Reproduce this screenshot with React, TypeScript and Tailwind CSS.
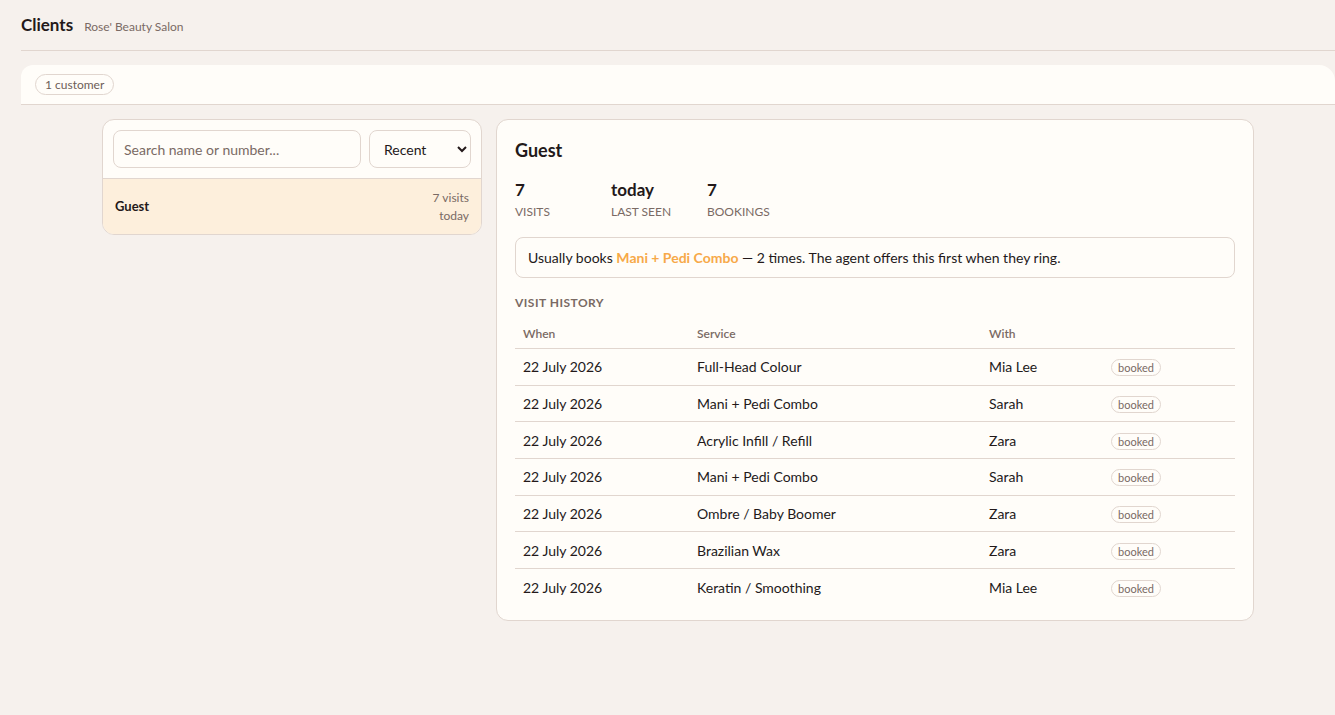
import React from 'react';

const visits = [
  { when: '22 July 2026', service: 'Full-Head Colour', staff: 'Mia Lee' },
  { when: '22 July 2026', service: 'Mani + Pedi Combo', staff: 'Sarah' },
  { when: '22 July 2026', service: 'Acrylic Infill / Refill', staff: 'Zara' },
  { when: '22 July 2026', service: 'Mani + Pedi Combo', staff: 'Sarah' },
  { when: '22 July 2026', service: 'Ombre / Baby Boomer', staff: 'Zara' },
  { when: '22 July 2026', service: 'Brazilian Wax', staff: 'Zara' },
  { when: '22 July 2026', service: 'Keratin / Smoothing', staff: 'Mia Lee' },
];

function Stat({ value, label }: { value: string; label: string }) {
  return (
    <div className="w-[96px]">
      <div className="text-[17px] font-bold leading-[22px] text-[#23191a]">{value}</div>
      <div className="mt-[3px] text-[12px] leading-[16px] uppercase text-[#7a6a64]">{label}</div>
    </div>
  );
}

export default function App() {
  return (
    <div className="min-h-[715px] bg-[#f6f1ed] pl-[21px] text-[#23191a]" style={{ fontFamily: 'Lato, "Noto Sans", sans-serif' }}>
      {/* header */}
      <div className="flex items-baseline gap-[11px] border-b border-[#e1d6cf] pt-[15px] pb-[14px]">
        <h1 className="text-[17px] font-bold leading-[20px]">Clients</h1>
        <span className="text-[12px] text-[#7a6a64]">Rose' Beauty Salon</span>
      </div>

      <div className="mt-[14px] flex h-[40px] items-center rounded-tl-[12px] rounded-tr-[16px] border-b border-[#e1d6cf] bg-[#fffdf9] px-[14px]">
        <span className="rounded-full border border-[#e1d6cf] px-[9px] py-[2px] text-[12px] leading-[15px] text-[#6e5e58]">1 customer</span>
      </div>

      <div className="mx-auto mt-[14px] grid w-[1152px] grid-cols-[380px_758px] items-start gap-[14px]">
        {/* left list */}
        <div className="overflow-hidden rounded-[12px] border border-[#e1d6cf] bg-[#fffdf9]">
          <div className="flex gap-[8px] border-b border-[#e1d6cf] p-[10px]">
            <input
              className="h-[38px] w-[248px] rounded-[8px] border border-[#e1d6cf] bg-[#fffdf9] px-[10px] text-[14px] text-[#23191a] placeholder:text-[#7a6a64] outline-none"
              placeholder="Search name or number..."
            />
            <select className="h-[38px] flex-1 rounded-[8px] border border-[#e1d6cf] bg-[#fffdf9] px-[10px] text-[14px] text-[#23191a] outline-none">
              <option>Recent</option>
            </select>
          </div>
          <div className="flex items-center justify-between bg-[#fdefdc] py-[10px] pl-[12px] pr-[12px]">
            <span className="text-[13px] font-bold">Guest</span>
            <div className="text-right text-[12px] leading-[17.5px] text-[#7a6a64]">
              <div>7 visits</div>
              <div>today</div>
            </div>
          </div>
        </div>

        {/* right detail */}
        <div className="rounded-[12px] border border-[#e1d6cf] bg-[#fffdf9] px-[18px] pt-[18px] pb-[15px]">
          <h2 className="text-[18px] font-bold leading-[24px]">Guest</h2>
          <div className="mt-[17px] flex">
            <Stat value="7" label="Visits" />
            <Stat value="today" label="Last seen" />
            <Stat value="7" label="Bookings" />
          </div>
          <div className="mt-[17px] rounded-[8px] border border-[#e1d6cf] px-[12px] py-[10px] text-[14px] leading-[19px]">
            Usually books <span className="font-bold text-[#f7a948]">Mani + Pedi Combo</span> — 2 times. The agent offers this first when they ring.
          </div>
          <div className="mt-[16px] text-[12px] font-bold uppercase tracking-[0.04em] text-[#7a6a64]">Visit history</div>
          <table className="mt-[7px] w-full border-collapse text-left">
            <thead>
              <tr className="border-b border-[#e1d6cf] text-[12px] font-semibold text-[#7a6a64]">
                <th className="w-[174px] px-[8px] pt-[6px] pb-[5px] font-semibold">When</th>
                <th className="w-[292px] px-[8px] pt-[6px] pb-[5px] font-semibold">Service</th>
                <th className="w-[122px] px-[8px] pt-[6px] pb-[5px] font-semibold">With</th>
                <th className="px-[8px] pt-[6px] pb-[5px]"></th>
              </tr>
            </thead>
            <tbody>
              {visits.map((v, i) => (
                <tr key={i} className={i < visits.length - 1 ? 'border-b border-[#e1d6cf] text-[14px]' : 'text-[14px]'}>
                  <td className="h-[36.67px] px-[8px]">{v.when}</td>
                  <td className="px-[8px]">{v.service}</td>
                  <td className="px-[8px]">{v.staff}</td>
                  <td className="px-[8px]">
                    <span className="rounded-full border border-[#e1d6cf] px-[6px] py-[1px] text-[11px] leading-[14px] text-[#7a6a64]">booked</span>
                  </td>
                </tr>
              ))}
            </tbody>
          </table>
        </div>
      </div>
    </div>
  );
}
